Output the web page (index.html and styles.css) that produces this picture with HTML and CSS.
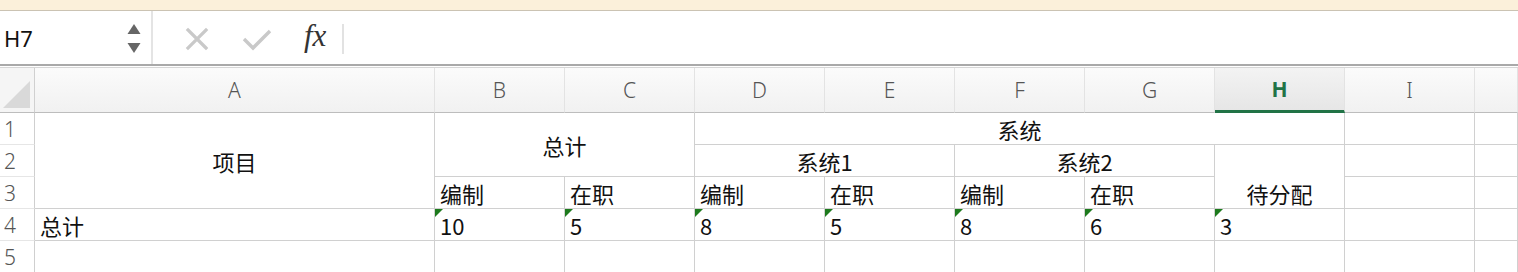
FILE: index.html
```html
<!DOCTYPE html>
<html lang="zh-CN">
<head>
    <meta charset="UTF-8">
    <title>工作表</title>
    <link rel="stylesheet" href="styles.css">
</head>
<body>
    <div class="notice"></div>

    <div class="formula-bar">
        <div class="name-box">
            <span class="cell-ref">H7</span>
            <span class="spinner">
                <svg width="14" height="32" viewBox="0 0 14 32">
                    <path d="M7 1 L13.5 11 L0.5 11 Z" fill="#666"/>
                    <path d="M0.5 20 L13.5 20 L7 30 Z" fill="#666"/>
                </svg>
            </span>
        </div>
        <div class="formula-tools">
            <svg class="tool" width="24" height="24" viewBox="0 0 24 24">
                <path d="M3 3 L21 21 M21 3 L3 21" stroke="#c9c9c9" stroke-width="3.2" stroke-linecap="square"/>
            </svg>
            <svg class="tool" width="30" height="24" viewBox="0 0 30 24">
                <path d="M2 12 L11 21 L28 4" stroke="#c9c9c9" stroke-width="3.4" fill="none"/>
            </svg>
            <span class="fx">fx</span>
            <span class="bar-sep"></span>
        </div>
    </div>

    <div class="sheet">
        <!-- column headers -->
        <div class="corner"><span class="corner-tri"></span></div>
        <div class="col-head">A</div>
        <div class="col-head">B</div>
        <div class="col-head">C</div>
        <div class="col-head">D</div>
        <div class="col-head">E</div>
        <div class="col-head">F</div>
        <div class="col-head">G</div>
        <div class="col-head active">H</div>
        <div class="col-head">I</div>
        <div class="col-head"></div>

        <!-- row headers -->
        <div class="row-head r1">1</div>
        <div class="row-head r2">2</div>
        <div class="row-head r3">3</div>
        <div class="row-head r4">4</div>
        <div class="row-head r5">5</div>

        <!-- header block -->
        <div class="cell center m-item">项目</div>
        <div class="cell center m-total">总计</div>
        <div class="cell center m-sys">系统</div>
        <div class="cell center m-sys1">系统1</div>
        <div class="cell center m-sys2">系统2</div>
        <div class="cell center bottom m-pending">待分配</div>
        <div class="cell empty c-i r1"></div>
        <div class="cell empty c-j r1"></div>
        <div class="cell empty c-i r2"></div>
        <div class="cell empty c-j r2"></div>

        <div class="cell c-b r3">编制</div>
        <div class="cell c-c r3">在职</div>
        <div class="cell c-d r3">编制</div>
        <div class="cell c-e r3">在职</div>
        <div class="cell c-f r3">编制</div>
        <div class="cell c-g r3">在职</div>
        <div class="cell empty c-i r3"></div>
        <div class="cell empty c-j r3"></div>

        <!-- data row -->
        <div class="cell c-a r4">总计</div>
        <div class="cell c-b r4 flag">10</div>
        <div class="cell c-c r4 flag">5</div>
        <div class="cell c-d r4 flag">8</div>
        <div class="cell c-e r4 flag">5</div>
        <div class="cell c-f r4 flag">8</div>
        <div class="cell c-g r4 flag">6</div>
        <div class="cell c-h r4 flag">3</div>
        <div class="cell empty c-i r4"></div>
        <div class="cell empty c-j r4"></div>

        <div class="cell empty c-a r5"></div>
        <div class="cell empty c-b r5"></div>
        <div class="cell empty c-c r5"></div>
        <div class="cell empty c-d r5"></div>
        <div class="cell empty c-e r5"></div>
        <div class="cell empty c-f r5"></div>
        <div class="cell empty c-g r5"></div>
        <div class="cell empty c-h r5"></div>
        <div class="cell empty c-i r5"></div>
        <div class="cell empty c-j r5"></div>
    </div>
</body>
</html>
```

FILE: styles.css
```css
body {
    margin: 0;
    padding: 0;
    background: #fff;
    font-family: "Noto Sans CJK SC", "Noto Sans", sans-serif;
    color: #111;
    overflow: hidden;
}
.notice {
    height: 10px;
    background-color: #fbf0da;
    border-bottom: 1px solid #cbc3b3;
}
.formula-bar {
    display: flex;
    height: 53px;
    background: #fff;
}
.name-box {
    width: 153px;
    display: flex;
    align-items: center;
    justify-content: space-between;
    padding: 0 10px 0 4px;
    box-sizing: border-box;
    border-right: 2px solid #e4e4e4;
}
.cell-ref {
    font-size: 22px;
    color: #111;
    font-family: "Noto Sans", sans-serif;
}
.spinner {
    display: flex;
    padding-top: 2px;
}
.formula-tools {
    display: flex;
    align-items: center;
    padding-left: 32px;
    padding-top: 3px;
}
.tool {
    display: block;
}
.tool + .tool {
    margin-left: 33px;
}
.fx {
    margin-left: 32px;
    font-family: "Liberation Serif", "DejaVu Serif", serif;
    font-style: italic;
    font-size: 31px;
    color: #333;
    padding-bottom: 6px;
}
.bar-sep {
    width: 2px;
    height: 30px;
    margin-left: 16px;
    background: #e2e2e2;
}

/* sheet grid */
.sheet {
    display: grid;
    grid-template-columns: 35px 400px repeat(8, 130px) 1fr;
    grid-template-rows: 45px repeat(5, 32px);
    border-top: 2px solid #a9a9a9;
    padding-top: 2px;
    box-shadow: inset 0 1px 0 #ffffff, inset 0 3px 0 #d6d6d6;
}
.corner {
    position: relative;
    background: #f5f5f5;
    border-right: 1px solid #d0d0d0;
    border-bottom: 1px solid #bdbdbd;
}
.corner-tri {
    position: absolute;
    right: 4px;
    bottom: 4px;
    width: 0;
    height: 0;
    border-left: 27px solid transparent;
    border-bottom: 27px solid #d9d9d9;
}
.col-head {
    display: flex;
    align-items: center;
    justify-content: center;
    background: linear-gradient(#fbfbfb, #f1f1f1);
    border-right: 1px solid #e3e3e3;
    border-bottom: 1px solid #bdbdbd;
    font-family: "Noto Sans", sans-serif;
    font-size: 21px;
    font-weight: 300;
    color: #555;
}
.col-head.active {
    background: linear-gradient(#f3f3f3, #e6e6e6);
    color: #217346;
    font-weight: 700;
    border-bottom: 3px solid #217346;
}
.row-head {
    grid-column: 1;
    display: flex;
    align-items: center;
    padding-left: 4px;
    background: #fff;
    border-right: 1px solid #cfcfcf;
    border-bottom: 1px solid #e6e6e6;
    font-family: "Noto Sans", sans-serif;
    font-size: 21px;
    font-weight: 300;
    color: #555;
}
.cell {
    position: relative;
    display: flex;
    align-items: flex-end;
    padding: 0 0 0 5px;
    border-right: 1px solid #d0d0d0;
    border-bottom: 1px solid #d0d0d0;
    font-size: 22px;
    font-weight: 400;
    line-height: 30px;
    white-space: nowrap;
}
.cell.center {
    justify-content: center;
    align-items: center;
    padding: 0;
}
.cell.bottom {
    align-items: flex-end;
}
.cell.flag::before {
    content: "";
    position: absolute;
    top: 0;
    left: 0;
    border-top: 8px solid #1d7a1d;
    border-right: 8px solid transparent;
}

/* placement */
.r1 { grid-row: 2; }
.r2 { grid-row: 3; }
.r3 { grid-row: 4; }
.r4 { grid-row: 5; }
.r5 { grid-row: 6; }
.c-a { grid-column: 2; }
.c-b { grid-column: 3; }
.c-c { grid-column: 4; }
.c-d { grid-column: 5; }
.c-e { grid-column: 6; }
.c-f { grid-column: 7; }
.c-g { grid-column: 8; }
.c-h { grid-column: 9; }
.c-i { grid-column: 10; }
.c-j { grid-column: 11; }

.m-item { grid-column: 2; grid-row: 2 / 5; }
.m-total { grid-column: 3 / 5; grid-row: 2 / 4; }
.m-sys { grid-column: 5 / 10; grid-row: 2; }
.m-sys1 { grid-column: 5 / 7; grid-row: 3; }
.m-sys2 { grid-column: 7 / 9; grid-row: 3; }
.m-pending { grid-column: 9; grid-row: 3 / 5; }
```
